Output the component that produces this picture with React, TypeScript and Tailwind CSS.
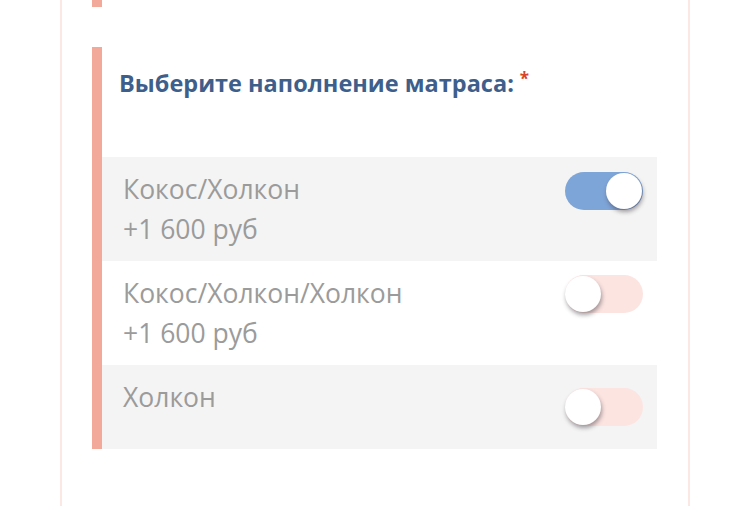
import React from 'react';

const options = [
  { label: 'Кокос/Холкон', price: '+1 600 руб', on: true, bg: 'bg-[#f4f4f4]', h: 'h-[104px]', tm: 'mt-[15px]' },
  { label: 'Кокос/Холкон/Холкон', price: '+1 600 руб', on: false, bg: 'bg-white', h: 'h-[104px]', tm: 'mt-[14px]' },
  { label: 'Холкон', price: '', on: false, bg: 'bg-[#f4f4f4]', h: 'h-[84px]', tm: 'mt-[23px]' },
];

function Toggle({ on }: { on: boolean }) {
  return (
    <div
      className={`relative w-[78px] h-[38px] rounded-full ${on ? 'bg-[#7ea5d8]' : 'bg-[#fce4e1]'}`}
    >
      <div
        className={`absolute top-[1px] w-[36px] h-[36px] rounded-full bg-white shadow-[1px_3px_4px_rgba(60,50,60,0.45)] ${on ? 'right-[1px]' : 'left-0'}`}
      />
    </div>
  );
}

export default function App() {
  return (
    <div className="w-[750px] h-[506px] bg-white overflow-hidden" style={{ fontFamily: '"Open Sans", sans-serif' }}>
      <div className="ml-[60px] w-[630px] h-full border-x-2 border-[#fbe8e3] pl-[30px] pr-[31px]">
        <div className="h-[7px] w-[10px] bg-[#f3a999]" />
        <div className="mt-[40px] flex">
          <div className="w-[10px] shrink-0 bg-[#f3a999]" />
          <div className="flex-1">
            <div className="h-[110px] pl-[17px] pt-[20px]">
              <h3 className="text-[23.5px] leading-[32px] font-bold text-[#3e5f8b]">
                Выберите наполнение матраса:
                <span className="ml-[6px] text-[#d6452b] text-[17px] align-top relative top-[-4px]">*</span>
              </h3>
            </div>
            {options.map((o) => (
              <div key={o.label} className={`${o.bg} ${o.h} flex justify-between pl-[21px] pr-[14px]`}>
                <div className="pt-[12px] text-[26.5px] leading-[40px] text-[#9b9b9b]">
                  <div>{o.label}</div>
                  {o.price && <div>{o.price}</div>}
                </div>
                <div className={o.tm}>
                  <Toggle on={o.on} />
                </div>
              </div>
            ))}
          </div>
        </div>
      </div>
    </div>
  );
}
